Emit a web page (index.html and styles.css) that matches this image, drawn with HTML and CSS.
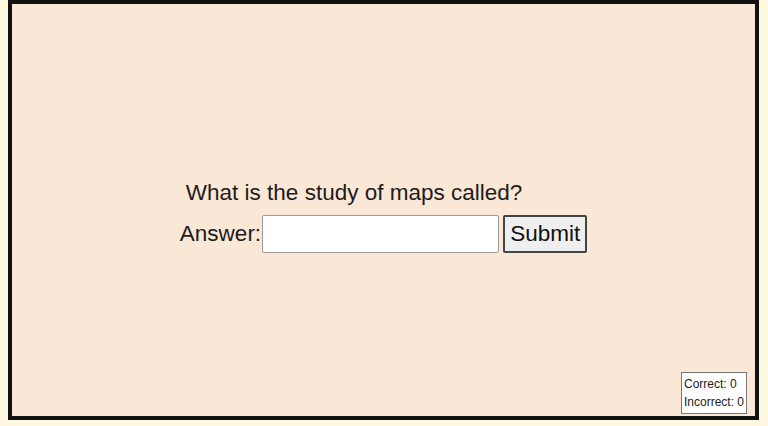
FILE: index.html
```html
<!DOCTYPE html>
<html>
<head>
    <title>Map Quiz</title>
    <link rel="stylesheet" href="styles.css">
</head>
<body>
<div id="quiz-frame">
  <div class="quiz">
    <div class="question">What is the study of maps called?</div>
    <form class="answer-row">
      <label for="answer">Answer:</label>
      <input id="answer" type="text">
      <button type="button">Submit</button>
    </form>
  </div>
  <div class="score">
    <div>Correct: 0</div>
    <div>Incorrect: 0</div>
  </div>
</div>
</body>
</html>
```

FILE: styles.css
```css
html, body {
  height: 100%;
}
body {
  margin: 0 9px 6px 8px;
  background: #fff8e1;
  font-family: "Liberation Sans", Arial, sans-serif;
  color: #1c1c1c;
}

#quiz-frame {
  position: relative;
  height: 420px;
  box-sizing: border-box;
  border: 4px solid #111;
  background: #fae7d5;
  display: flex;
  align-items: center;
  justify-content: center;
}
.quiz {
  margin-top: 12px;
}
.question {
  font-size: 22.5px;
  padding-left: 6px;
  margin-bottom: 9px;
}
.answer-row {
  display: flex;
  align-items: center;
  margin: 0;
}
.answer-row label {
  font-size: 22.5px;
}
.answer-row input {
  width: 227px;
  height: 36px;
  margin: 0 4px 0 1px;
  padding: 0 4px;
  border: 1px solid #999;
  border-radius: 2px;
  background: #fff;
  font-size: 20px;
}
.answer-row button {
  height: 38px;
  padding: 0 5px;
  border: 2px solid #444;
  border-radius: 2px;
  background: #efefef;
  color: #111;
  font: 22.5px "Liberation Sans", Arial, sans-serif;
}

/* running tally in the corner */
.score {
  position: absolute;
  right: 8px;
  bottom: 2px;
  padding: 2px;
  border: 1px solid #777;
  background: #fff;
  font-size: 12px;
  line-height: 18px;
  color: #222;
}
```
